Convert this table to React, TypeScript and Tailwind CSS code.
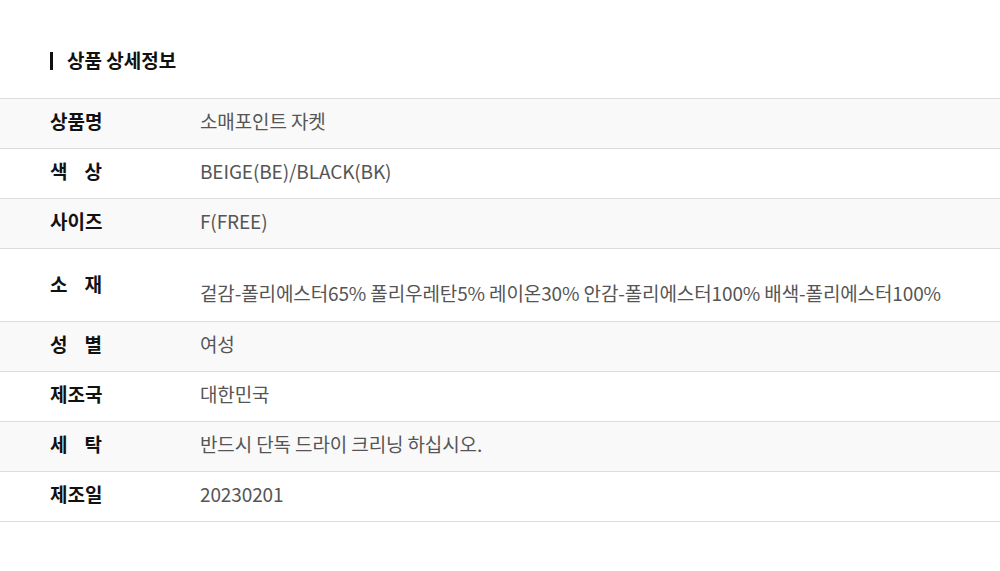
import React from "react";

const rows: { label: string[]; value: string; tall?: boolean }[] = [
  { label: ["상품명"], value: "소매포인트 자켓" },
  { label: ["색", "상"], value: "BEIGE(BE)/BLACK(BK)" },
  { label: ["사이즈"], value: "F(FREE)" },
  {
    label: ["소", "재"],
    value:
      "겉감-폴리에스터65% 폴리우레탄5% 레이온30% 안감-폴리에스터100% 배색-폴리에스터100%",
    tall: true,
  },
  { label: ["성", "별"], value: "여성" },
  { label: ["제조국"], value: "대한민국" },
  { label: ["세", "탁"], value: "반드시 단독 드라이 크리닝 하십시오." },
  { label: ["제조일"], value: "20230201" },
];

export default function App() {
  return (
    <div
      className="w-[1000px] h-[571px] bg-white overflow-hidden"
      style={{ fontFamily: '"Noto Sans CJK KR", "Noto Sans", sans-serif' }}
    >
      <div className="h-[98px] flex items-start pt-[51px] pl-[50px]">
        <div className="flex items-center gap-[14px]">
          <div className="w-[3px] h-[18px] bg-[#111]" />
          <div className="text-[19px] leading-[18px] font-bold text-[#111] pb-[2px] whitespace-nowrap">
            상품 상세정보
          </div>
        </div>
      </div>
      <div className="border-t border-[#dcdcdc]">
        {rows.map((r, i) => (
          <div
            key={i}
            className={`flex border-b border-[#dcdcdc] ${
              i % 2 === 0 ? "bg-[#f9f9f9]" : "bg-white"
            } ${r.tall ? "h-[73px]" : "h-[50px] items-center pb-[5px]"}`}
          >
            <div
              className={`w-[200px] pl-[50px] shrink-0 ${r.tall ? "pt-[23px]" : ""}`}
            >
              <div
                className={`w-[52px] flex whitespace-nowrap ${
                  r.label.length > 1 ? "justify-between" : ""
                } text-[19px] leading-[24px] font-bold text-[#111]`}
              >
                {r.label.map((l, j) => (
                  <span key={j}>{l}</span>
                ))}
              </div>
            </div>
            <div
              className={`text-[19px] leading-[24px] text-[#555] tracking-[-0.12px] whitespace-nowrap ${
                r.tall ? "pt-[32px]" : ""
              }`}
            >
              {r.value}
            </div>
          </div>
        ))}
      </div>
    </div>
  );
}
